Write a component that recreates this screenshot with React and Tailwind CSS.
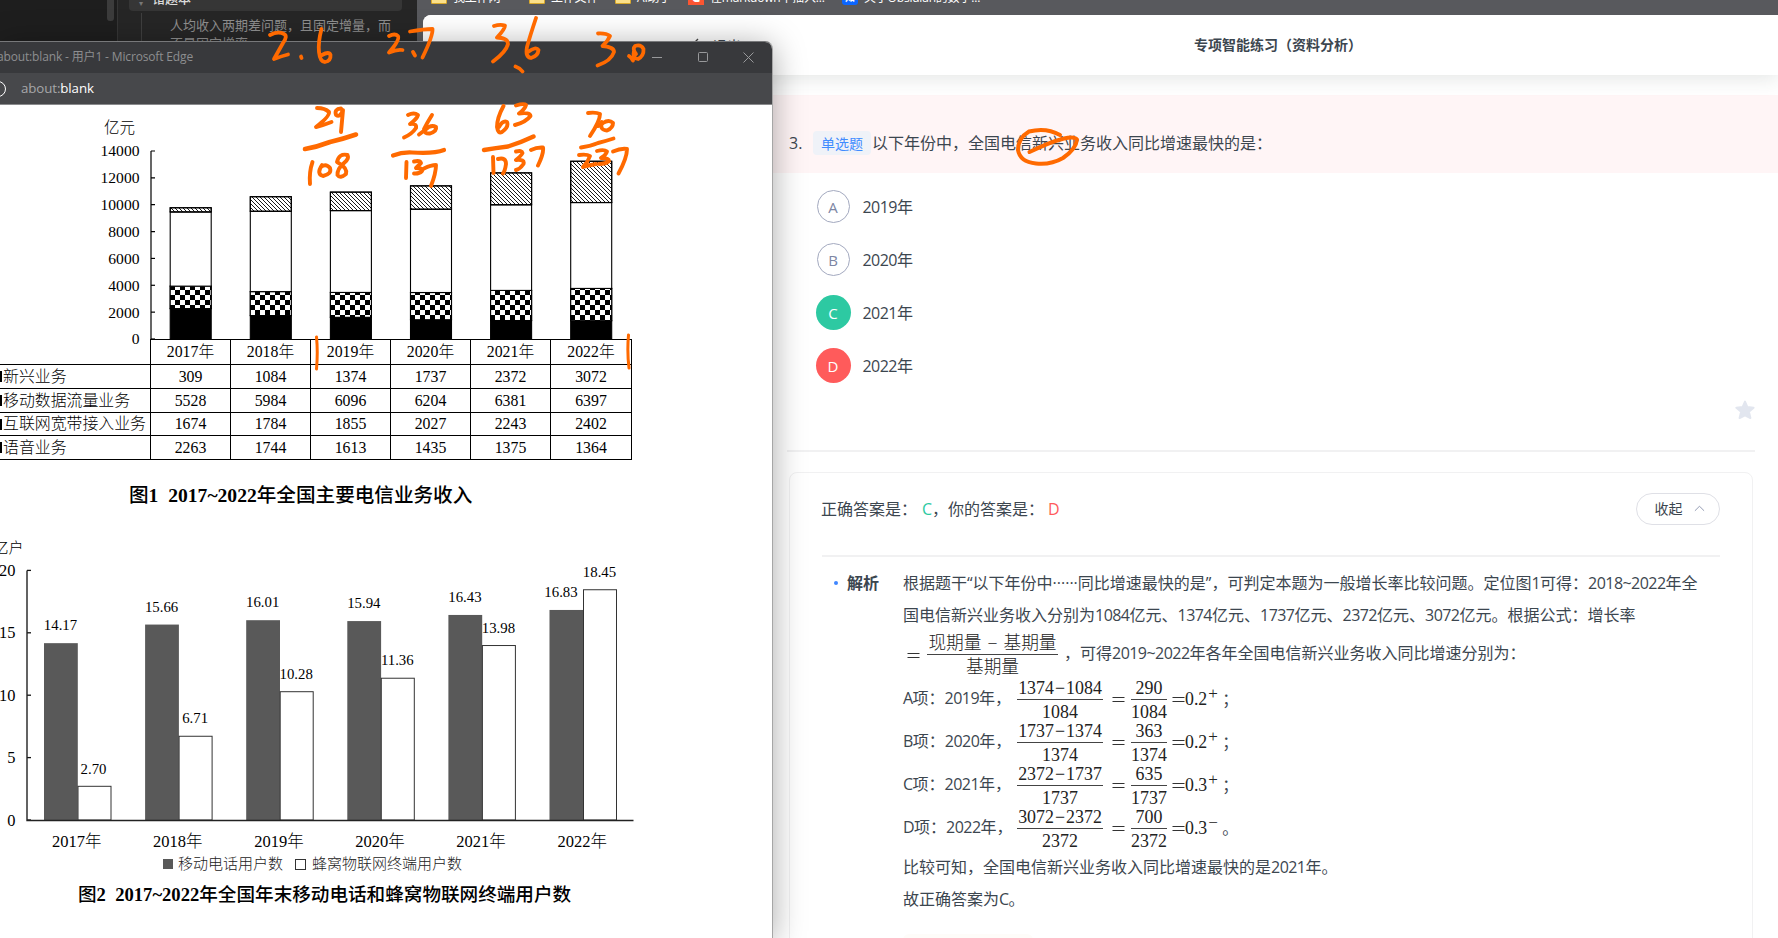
import React from "react";

const SERIF = "font-['Liberation_Serif','Noto_Sans_CJK_SC',serif]";
const SANS = "font-['Open_Sans','Noto_Sans_CJK_SC',sans-serif]";

const years = ["2017年", "2018年", "2019年", "2020年", "2021年", "2022年"];
const services = [
  { name: "新兴业务", values: [309, 1084, 1374, 1737, 2372, 3072] },
  { name: "移动数据流量业务", values: [5528, 5984, 6096, 6204, 6381, 6397] },
  { name: "互联网宽带接入业务", values: [1674, 1784, 1855, 2027, 2243, 2402] },
  { name: "语音业务", values: [2263, 1744, 1613, 1435, 1375, 1364] },
];
const phone = ["14.17", "15.66", "16.01", "15.94", "16.43", "16.83"];
const iot = ["2.70", "6.71", "10.28", "11.36", "13.98", "18.45"];

// Tightens Latin runs so digits sit at UI width between full-width glyphs.
function T({ children }) {
  return children.split(/([0-9A-Za-z~]+)/).map((s, i) =>
    i % 2 ? <span key={i} className="tracking-[-0.53px]">{s}</span> : s
  );
}

// Figure captions: bold numerals with medium-weight Chinese.
function Caption({ children }) {
  return children.split(/([0-9~]+)/).map((s, i) =>
    i % 2 ? <span key={i} className="font-bold">{s}</span> : s
  );
}

function RevenueChart() {
  const k = 188 / 14000;
  const y0 = 234;
  return (
    <svg width="771" height="234" viewBox="0 0 771 234" className={`block overflow-visible ${SERIF}`}>
      <defs>
        <pattern id="hatch" width="4" height="4" patternUnits="userSpaceOnUse">
          <path d="M-1 -1L5 5M-1 3L1 5M3 -1L5 1" stroke="#000" strokeWidth="0.9" />
        </pattern>
        <pattern id="check" width="10" height="10" patternUnits="userSpaceOnUse">
          <rect width="10" height="10" fill="#fff" />
          <rect width="5" height="5" />
          <rect x="5" y="5" width="5" height="5" />
        </pattern>
      </defs>
      <text x="104" y="28" fontSize="15.5" fontWeight="300">亿元</text>
      <path d="M151 46V234" stroke="#000" strokeWidth="1.2" />
      {[0, 2000, 4000, 6000, 8000, 10000, 12000, 14000].map((v) => (
        <g key={v}>
          <path d={`M151 ${y0 - v * k}h4`} stroke="#000" strokeWidth="1.2" />
          <text x="139.5" y={y0 - v * k + 5.4} textAnchor="end" fontSize="15.6">{v}</text>
        </g>
      ))}
      {years.map((yr, i) => {
        const x = 170.2 + i * 80.1;
        let top = y0;
        return (
          <g key={yr} stroke="#000" strokeWidth="1.1">
            {[3, 2, 1, 0].map((s) => {
              const h = services[s].values[i] * k;
              top -= h;
              return (
                <g key={s}>
                  <rect x={x} y={top} width="41" height={h} fill={["#fff", "#fff", "#fff", "#000"][s]} />
                  {s === 0 && <rect x={x} y={top} width="41" height={h} fill="url(#hatch)" />}
                  {s === 2 && <rect x={x} y={top} width="41" height={h} fill="url(#check)" />}
                </g>
              );
            })}
          </g>
        );
      })}
    </svg>
  );
}

function RevenueTable() {
  const cell = "flex items-center justify-center border-l border-b border-black";
  return (
    <div className={`grid w-[632px] grid-cols-[150px_repeat(5,80px)_82px] grid-rows-[26px_24px_24px_23px_24px] text-[15.8px] leading-none text-black ${SERIF}`}>
      <div className="border-b border-black" />
      {years.map((y, i) => (
        <div key={y} className={`${cell} border-t ${i === 5 ? "border-r" : ""}`}>
          <span>{y.slice(0, 4)}<span className="font-light">年</span></span>
        </div>
      ))}
      {services.map((s) => (
        <React.Fragment key={s.name}>
          <div className="flex items-center gap-[2px] border-b border-black whitespace-nowrap">
            <span className="h-[11px] w-[2px] bg-black" />
            <span className="-ml-[1px] text-[15.9px] font-light">{s.name}</span>
          </div>
          {s.values.map((v, i) => (
            <div key={i} className={`${cell} ${i === 5 ? "border-r" : ""}`}>{v}</div>
          ))}
        </React.Fragment>
      ))}
    </div>
  );
}

function UsersChart() {
  const k = 12.48;
  const y0 = 285;
  return (
    <svg width="771" height="315" viewBox="0 0 771 315" className={`block overflow-visible ${SERIF}`}>
      <text x="23.5" y="18" textAnchor="end" fontSize="15" fontWeight="300">亿户</text>
      {[0, 5, 10, 15, 20].map((v) => (
        <g key={v}>
          <path d={`M27 ${y0 - v * k}h4`} stroke="#111" strokeWidth="1.3" />
          <text x="15.5" y={y0 - v * k + 5.5} textAnchor="end" fontSize="16.4">{v}</text>
        </g>
      ))}
      {years.map((yr, i) => {
        const x = 44 + i * 101.1;
        const a = Number(phone[i]) * k;
        const b = Number(iot[i]) * k;
        return (
          <g key={yr}>
            <rect x={x} y={y0 - a} width="33.8" height={a} fill="#595959" />
            <rect x={x + 34} y={y0 - b} width="33" height={b} fill="#fff" stroke="#333" />
            <text x={x + (i === 5 ? 11.5 : 16.5)} y={y0 - a - 13} textAnchor="middle" fontSize="14.8">{phone[i]}</text>
            <text x={x + (i === 0 ? 49.5 : 50)} y={y0 - b - 12.8} textAnchor="middle" fontSize="14.8">{iot[i]}</text>
            <text x={x + 32.7} y="312" textAnchor="middle" fontSize="16.5">{yr.slice(0, 4)}<tspan fontWeight="300">年</tspan></text>
          </g>
        );
      })}
      <path d="M27 35.5V285.5H633.5" fill="none" stroke="#222" strokeWidth="1.4" />
    </svg>
  );
}

function PopupWindow() {
  return (
    <section className="absolute left-0 top-[41px] h-[897px] w-[773px] overflow-hidden rounded-tr-[8px] border-t border-r border-t-[#77787a] border-r-[#a6a6a6] bg-white shadow-[0_4px_32px_rgba(0,0,0,0.34)]">
      <header className={`flex h-[31px] items-center justify-between bg-[#38393c] text-[#8d8e90] ${SANS}`}>
        <span className="-ml-[3px] -mt-[2px] whitespace-nowrap text-[12px] tracking-[-0.15px]">about:blank - 用户1 - Microsoft Edge</span>
        <svg width="120" height="30" viewBox="0 0 120 30" fill="none" stroke="#98999b" className="-mt-[2px] shrink-0">
          <path d="M0 15.5h10M91.5 10.5l10 10M101.5 10.5l-10 10" />
          <rect x="46.5" y="10.5" width="9" height="9" rx="1" />
        </svg>
      </header>
      <div className={`flex h-[32px] items-center border-b border-[#8a8b8d] bg-[#47484b] text-[13.3px] ${SANS}`}>
        <span className="-ml-[10px] mr-[15px] size-[16px] rounded-full border-[1.5px] border-white" />
        <span className="tracking-[-0.1px] text-[#a6a7a9]">about:<span className="text-white">blank</span></span>
      </div>
      <RevenueChart />
      <RevenueTable />
      <h2 className={`ml-[129px] mt-[23px] flex h-[26px] items-center whitespace-pre text-[19.6px] leading-none font-medium text-black ${SERIF}`}>
        <span><Caption>{"图1\u00a0 2017~2022年全国主要电信业务收入"}</Caption></span>
      </h2>
      <div className="mt-[26px]">
        <UsersChart />
      </div>
      <div className={`ml-[163px] mt-[4px] flex h-[20px] items-center text-[15px] leading-none font-light text-[#222] ${SERIF}`}>
        <span className="mr-[5px] size-[10px] bg-[#595959]" />
        移动电话用户数
        <span className="ml-[12px] mr-[6px] size-[11px] border border-[#333]" />
        蜂窝物联网终端用户数
      </div>
      <h2 className={`ml-[78px] mt-[8px] flex h-[26px] items-center whitespace-pre text-[18.6px] leading-none font-medium text-black ${SERIF}`}>
        <span><Caption>{"图2\u00a0 2017~2022年全国年末移动电话和蜂窝物联网终端用户数"}</Caption></span>
      </h2>
    </section>
  );
}

function NotesSidebar() {
  return (
    <aside className={`flex h-[60px] w-[417px] shrink-0 overflow-hidden bg-[#1e1e1e] ${SANS}`}>
      <div className="flex w-[118px] justify-end border-r border-[#363636] pr-[3px]">
        <div className="h-[21px] w-[7px] rounded-b-[3px] bg-[#3c3c3c]" />
      </div>
      <div className="w-[299px] bg-[#262626]">
        <div className="ml-[11px] flex h-[11px] w-[273px] items-end rounded-b-[4px] bg-[#363636]">
          <span className="relative -top-[4px] ml-[10px] text-[8px] leading-[8px] text-[#777]">▾</span>
          <span className="ml-[9px] h-[11px] text-[13px] leading-[0px] font-medium text-[#dcdcdc]">
            <span className="relative -top-[2px]">错题本</span>
          </span>
        </div>
        <div className="ml-[23px] mt-[2px] w-[380px] border-l border-[#3f3f3f] pl-[28px] pt-[3px] text-[13px] leading-[18px] text-[#8f8f8f]">
          人均收入两期差问题，且固定增量，而
          <br />
          不是固定增率
        </div>
      </div>
    </aside>
  );
}

function Bookmark({ icon, label, className }) {
  return (
    <span className={`flex shrink-0 items-center gap-[6px] whitespace-nowrap ${className}`}>
      {icon}
      <span className="pt-[2px] tracking-[-0.2px]">{label}</span>
    </span>
  );
}

function Bookmarks() {
  const folder = <span className="h-[13px] w-[16px] rounded-[1px] border border-[#d9a92c] bg-[#fbe08a]" />;
  return (
    <div className={`flex h-[15px] overflow-hidden bg-[#58595d] pl-[14px] text-[12px] text-white ${SANS}`}>
      <div className="-mt-[13px] flex h-[20px] items-center leading-none">
        <Bookmark className="w-[98px]" icon={folder} label="我工作网" />
        <Bookmark className="w-[86px]" icon={folder} label="工作文件" />
        <Bookmark className="w-[73px]" icon={folder} label="AI助手" />
        <Bookmark
          className="w-[154px]"
          icon={<span className="flex size-[16px] items-center justify-center bg-[#fc5531] text-[14px] font-bold">C</span>}
          label="在markdown中插入..."
        />
        <Bookmark
          className="w-[180px]"
          icon={<span className="flex size-[16px] items-center justify-center rounded-[3px] bg-[#0b66ff] text-[10px] font-bold">知</span>}
          label="关于Obsidian的数学..."
        />
      </div>
    </div>
  );
}

function Option({ letter, year, state }) {
  const style = {
    plain: "size-[33px] mx-[1px] border border-[#a3a9bf] text-[#7d86a3]",
    right: "size-[35px] bg-[#2dc9a2] text-white",
    wrong: "size-[35px] bg-[#ff5b5b] text-white",
  }[state];
  return (
    <li className="flex h-[53px] items-center gap-[12px]">
      <span className={`flex items-center justify-center rounded-full text-[15px] ${style}`}>{letter}</span>
      <span><T>{year}</T></span>
    </li>
  );
}

function Fraction({ top, bottom, className }) {
  return (
    <span className={`inline-flex flex-col items-center leading-none text-[#222] ${SERIF} ${className}`}>
      <span className="flex h-[21px] items-center justify-center whitespace-nowrap">{top}</span>
      <span className="h-px w-full bg-[#444]" />
      <span className="flex h-[21px] items-center justify-center whitespace-nowrap pt-[3px]">{bottom}</span>
    </span>
  );
}

function Equals({ className }) {
  return (
    <svg width="13" height="7" viewBox="0 0 13 7" className={`shrink-0 ${className}`}>
      <path d="M0.5 1.5h12M0.5 5.5h12" stroke="#333" strokeWidth="1" />
    </svg>
  );
}

const steps = [
  { k: "A", year: "2019", a: "1374", b: "1084", diff: "290", res: "0.2", sign: "+", end: "；" },
  { k: "B", year: "2020", a: "1737", b: "1374", diff: "363", res: "0.2", sign: "+", end: "；" },
  { k: "C", year: "2021", a: "2372", b: "1737", diff: "635", res: "0.3", sign: "+", end: "；" },
  { k: "D", year: "2022", a: "3072", b: "2372", diff: "700", res: "0.3", sign: "−", end: "。" },
];

function Step({ s }) {
  return (
    <div className="flex h-[43px] items-center whitespace-nowrap">
      <span className="w-[114px]"><T>{`${s.k}项：${s.year}年，`}</T></span>
      <Fraction className="mt-[3px] w-[86px] text-[17.9px]" top={<span>{s.a}<span className="mx-[1px]">−</span>{s.b}</span>} bottom={s.b} />
      <Equals className="ml-[9px] mt-[3px]" />
      <Fraction className="ml-[6px] mt-[3px] w-[36px] text-[17.9px]" top={s.diff} bottom={s.b} />
      <Equals className="ml-[5px] mt-[3px]" />
      <span className={`mt-[2px] flex items-center text-[17.8px] leading-none text-[#222] ${SERIF}`}>
        {s.res}
        <span className="relative -top-[6px] ml-[1px] w-[10px] text-[17px]">{s.sign}</span>
      </span>
      <span className="ml-[4px] mt-[1px]">{s.end}</span>
    </div>
  );
}

function QuizPage() {
  return (
    <main className={`flex h-[923px] flex-col overflow-hidden rounded-tl-[8px] bg-white text-[16px] text-[#3c464f] ${SANS}`}>
      <header className="relative flex h-[60px] shrink-0 items-center bg-white shadow-[0_4px_18px_rgba(40,60,50,0.12)]">
        <div className="ml-[268px] flex w-[503px] items-center gap-[14px] text-[14px]">
          <svg width="8" height="14" viewBox="0 0 8 14" fill="none" stroke="#444" strokeWidth="1.4"><path d="M7 1L1 7l6 6" /></svg>
          退出
        </div>
        <h1 className="-mt-[1px] whitespace-nowrap text-[14px] font-bold">专项智能练习（资料分析）</h1>
      </header>

      <div className="mt-[20px] flex h-[78px] shrink-0 items-center bg-[#fff5f6] pl-[366px] pt-[18px]">
        <span className="w-[24px]">3.</span>
        <span className="mr-[1px] flex h-[24px] w-[58px] items-center justify-center rounded-[4px] bg-[#eff2f8] text-[14px] text-[#3f8cff]">单选题</span>
        <p className="whitespace-nowrap">以下年份中，全国电信新兴业务收入同比增速最快的是：</p>
      </div>

      <ul className="ml-[392.5px] mt-[7.4px] flex flex-col">
        <Option letter="A" year="2019年" state="plain" />
        <Option letter="B" year="2020年" state="plain" />
        <Option letter="C" year="2021年" state="right" />
        <Option letter="D" year="2022年" state="wrong" />
      </ul>

      <div className="ml-[364px] mr-[23px] flex h-[59.6px] shrink-0 items-start justify-end border-b-2 border-[#f1f1f2] pt-[8px]">
        <svg width="20" height="20" viewBox="0 0 20 20" fill="#e2e6ef" stroke="#e2e6ef" strokeWidth="2" strokeLinejoin="round">
          <path d="M10 1.6l2.4 5.5 6.2.6-4.7 4 1.5 6.3-5.4-2.6L4.6 18l1.5-6.3-4.7-4 6.2-.6z" />
        </svg>
      </div>

      <article className="ml-[366px] mr-[25px] mt-[20px] h-[520px] shrink-0 rounded-t-[8px] border border-[#f1f1f2] px-[32px]">
        <div className="flex h-[84px] items-center justify-between border-b-2 border-[#f1f1f2] pb-[10px]">
          <p className="-ml-[1px] whitespace-pre">正确答案是：<span className="ml-[5px] text-[#2dc9a2]">C</span>，你的答案是：<span className="ml-[4px] text-[#ff5b5b]">D</span></p>
          <button className="flex h-[32px] w-[84px] items-center rounded-full border border-[#dfe0e6] pl-[17.5px] text-[14px]">
            收起
            <svg width="11" height="7" viewBox="0 0 12 7" fill="none" stroke="#8a93ad" className="ml-[11px]"><path d="M1 6l5-5 5 5" /></svg>
          </button>
        </div>

        <section className="mt-[10px] flex">
          <div className="flex h-[32px] w-[81px] shrink-0 items-center pl-[12px]">
            <span className="mr-[9px] size-[4px] rounded-full bg-[#3f86ff]" />
            <h3 className="font-bold">解析</h3>
          </div>
          <div className="whitespace-nowrap">
            <p className="h-[32px] leading-[32px]"><T>根据题干“以下年份中······同比增速最快的是”，可判定本题为一般增长率比较问题。定位图1可得：2018~2022年全</T></p>
            <p className="h-[32px] leading-[32px]"><T>国电信新兴业务收入分别为1084亿元、1374亿元、1737亿元、2372亿元、3072亿元。根据公式：增长率</T></p>
            <div className="flex h-[46px] items-center">
              <Equals className="ml-[4px] mt-[3px]" />
              <Fraction
                className="ml-[7px] mt-[2px] w-[131px] text-[17.7px] font-light"
                top={<span>现期量<span className="mx-[6px]">−</span>基期量</span>}
                bottom="基期量"
              />
              <span className="relative -top-[1px] ml-[6px]"><T>，可得2019~2022年各年全国电信新兴业务收入同比增速分别为：</T></span>
            </div>
            {steps.map((s) => <Step key={s.k} s={s} />)}
            <p className="mt-[2px] h-[32px] leading-[32px]"><T>比较可知，全国电信新兴业务收入同比增速最快的是2021年。</T></p>
            <p className="h-[32px] leading-[32px]"><T>故正确答案为C。</T></p>
            <div className="mt-[19px] h-[6px] w-[130px] rounded-t-full bg-[#fefcf9]" />
          </div>
        </section>
      </article>
    </main>
  );
}

function Handwriting() {
  return (
    <svg width="1778" height="938" viewBox="0 0 1778 938" className="pointer-events-none absolute left-0 top-0" fill="none" stroke="#ff6a00" strokeLinecap="round" strokeLinejoin="round">
      <g strokeWidth="3.8">
        <path d="M270 35Q278 31 284 34Q288 36 283 43L274 59Q282 56 288 54.5M301 56.5l.5 1.5M321.5 29Q318 42 319 52Q320 62 325 62Q331 61 330.5 55Q329 51 322 55" />
        <path d="M389 36Q395 33 398 36Q400 40 389 52.5Q397 49 402.5 50M413 52l2 3.5M410 31.5Q424 29 432.5 29Q433 36 422.5 57.5" />
        <path d="M494 26Q500 24 505 25.5Q505 29 497 37.5Q508 38 508 44Q506 52 493 61.5M536 18Q530 36 527 47Q525 57 531 58Q538 56 538.5 50Q536 46 528 52M515.5 66.5Q520 68 522.5 71.5" />
        <path d="M598 33.5Q606 33 610 36Q608 41 602.5 46Q614 47 614 52Q611 61 597.5 65.5M629 56Q631 57 633 60.5M634 51Q632 58 638 59Q644 56 643.5 49Q641 44 635 46Q632 49 636 54" />
      </g>
      <g strokeWidth="3.9">
        <path d="M317 108Q325 108 329 112Q330 116 316 127Q324 125 331.5 122M341 108.5Q334 109 336 115Q340 118 343 110L341 132" />
        <path strokeWidth="4.6" d="M305 149Q317 147 330 142Q343 139 356 134.5" />
        <path d="M312.5 162Q309 172 310 184M322 165Q316 174 323 176Q332 174 330 168Q326 163 321 167M347.5 155Q339 153 337 162Q348 168 346 174Q340 179 337.5 175Q337 169 344 163Q350 158 347 155" />
        <path d="M408 115Q414 112 418 115Q417 119 410 124Q417 123 416 128Q412 134 404 137.5M432 115Q427 123 424 129Q424 134 430 133.5Q437 131 436 127Q431 124 425 130L419 134.5" />
        <path d="M393 155.5Q402 152 412 152.5Q434 154 444 150" strokeWidth="4.2" />
        <path d="M406.5 162L406 178M414 161.5Q420 160 421 163Q419 165 416 168Q424 168 422 171Q419 174 414 173.5M424 168.5Q431 165 436 165Q436 173 431 186" />
        <path d="M503.5 106Q497 118 497 127Q498 134 502 132Q509 127 507 122Q503 120 499 127M516 105.5Q524 103 526 105Q525 109 519 113.5Q530 112 530.5 116Q526 122 515 125" />
        <path d="M484 150Q496 148 508 146.5Q522 142 533.5 136.5" strokeWidth="4.4" />
        <path d="M493 157L493.5 173M498 159Q506 157 506 164Q505 171 503 173.5M516 151.5Q522 150 522.5 153Q521 156 516 160Q525 159 523.5 164Q520 169 516 170M531 150Q537 147 543 147.5Q544 153 538 165.5" />
        <path d="M588 113Q596 112 600 114Q600 121 590 136M602 122Q599 130 607 130.5Q613 128 613 123Q609 119 603 123L598 126" />
        <path d="M581 147.5Q591 146 598 143Q606 141 613.5 138.5" />
        <path d="M579 155Q587 154 590 156Q588 162 583 167Q590 165 596 164M597 151Q604 149 607 151.5Q606 155 601 158Q609 158 609 161Q606 164 599 164M613 151.5Q621 148 627 149Q627 158 618.5 173.5" />
      </g>
      <path d="M316.5 337Q318 352 316.5 369M628.5 335Q627 352 629 368" strokeWidth="3" />
      <path d="M1029.5 152Q1050 142 1064 138.5Q1074 136 1077 139.5Q1076 149 1063 158Q1051 165 1036 163.5Q1020 162 1018 150Q1018 138 1029 131.5Q1046 127 1060 135" strokeWidth="4" />
    </svg>
  );
}

export default function App() {
  return (
    <div className="relative flex h-[938px] w-[1778px] overflow-hidden bg-[#262626]">
      <NotesSidebar />
      <div className="flex min-w-0 flex-1 flex-col bg-[#58595d]">
        <Bookmarks />
        <div className="pl-[6px]">
          <QuizPage />
        </div>
      </div>
      <PopupWindow />
      <Handwriting />
    </div>
  );
}
